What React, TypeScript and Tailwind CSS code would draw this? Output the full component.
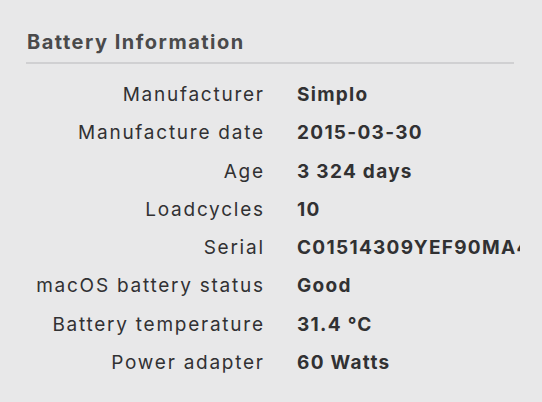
import React from "react";

const rows: [string, string][] = [
  ["Manufacturer", "Simplo"],
  ["Manufacture date", "2015-03-30"],
  ["Age", "3 324 days"],
  ["Loadcycles", "10"],
  ["Serial", "C01514309YEF90MA4"],
  ["macOS battery status", "Good"],
  ["Battery temperature", "31.4 °C"],
  ["Power adapter", "60 Watts"],
];

export default function App() {
  return (
    <div className="w-[542px] h-[402px] bg-[#e8e8e9] overflow-hidden font-['Inter',sans-serif]">
      <div className="pt-[28px] pl-[26px] pr-[28px]">
        <div className="pl-[1px] text-[20px] leading-[28px] font-bold tracking-[1.5px] text-[#4a4a4b]">
          Battery Information
        </div>
        <div className="mt-[6px] h-[2px] bg-[#d0d0d2]" />
      </div>
      <div className="mt-[12px] grid grid-cols-[238px_223px] gap-x-[34px] pl-[25px]">
        {rows.map(([k, v]) => (
          <React.Fragment key={k}>
            <div className="text-right text-[19px] leading-[38.3px] tracking-[1.75px] -mr-[1.75px] text-[#313133] whitespace-nowrap">
              {k}
            </div>
            <div className="text-[19px] leading-[38.3px] font-bold tracking-[1.3px] text-[#313133] whitespace-nowrap overflow-hidden">
              {v}
            </div>
          </React.Fragment>
        ))}
      </div>
    </div>
  );
}
